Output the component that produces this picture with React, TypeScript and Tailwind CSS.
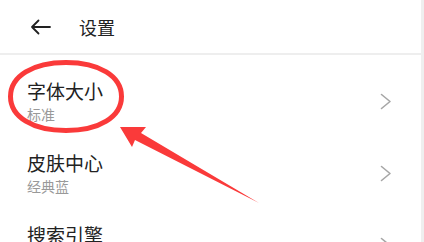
const items = [
  { title: '字体大小', sub: '标准' },
  { title: '皮肤中心', sub: '经典蓝' },
  { title: '搜索引擎', sub: '百度' },
];

export default function App() {
  return (
    <div
      className="relative w-[424px] h-[242px] overflow-hidden bg-white flex"
      style={{ fontFamily: '"Noto Sans CJK SC", "Noto Sans", sans-serif' }}
    >
      <div className="flex-1 flex flex-col">
        {/* header */}
        <div className="h-[55px] shrink-0 flex items-center border-b-2 border-[#eeeeee] pl-[30px]">
          <svg width="21" height="16" viewBox="0 0 21 16" fill="none" stroke="#222" strokeWidth="1.8" strokeLinecap="round" strokeLinejoin="round">
            <path d="M20 8H2M8.5 1.5L2 8l6.5 6.5" />
          </svg>
          <span className="ml-[28px] text-[18px] leading-none text-[#222]">设置</span>
        </div>

        {/* list */}
        <div className="pt-[10px] flex flex-col">
          {items.map((it) => (
            <div key={it.title} className="h-[72px] shrink-0 flex items-center pl-[27px] pr-[29px]">
              <div className="flex-1 flex flex-col">
                <span className="text-[19px] leading-[24px] text-[#222]">{it.title}</span>
                <span className="mt-[2px] text-[14px] leading-[18px] text-[#999999]">{it.sub}</span>
              </div>
              <svg width="12" height="17" viewBox="0 0 12 17" fill="none" stroke="#a6a6a6" strokeWidth="1.6" strokeLinecap="round" strokeLinejoin="round">
                <path d="M1.5 1.5L10 8.5 1.5 15.5" />
              </svg>
            </div>
          ))}
        </div>
      </div>
      <div className="w-[3px] shrink-0 bg-[#efefef]" />

      {/* red annotation */}
      <svg className="absolute inset-0 pointer-events-none" width="424" height="242" viewBox="0 0 424 242">
        <path
          d="M10.5 96.5C10.5 76.1 32.7 62.5 66 62.5C99.3 62.5 121.5 76.1 121.5 96.5C121.5 116.9 99.3 130.5 66 130.5C32.7 130.5 10.5 116.9 10.5 96.5Z"
          fill="none"
          stroke="#fa3a3a"
          strokeWidth="5"
        />
        <polygon points="120,127 146,127 141,133 259,203 135,140 132,147" fill="#fa3a3a" />
      </svg>
    </div>
  );
}
